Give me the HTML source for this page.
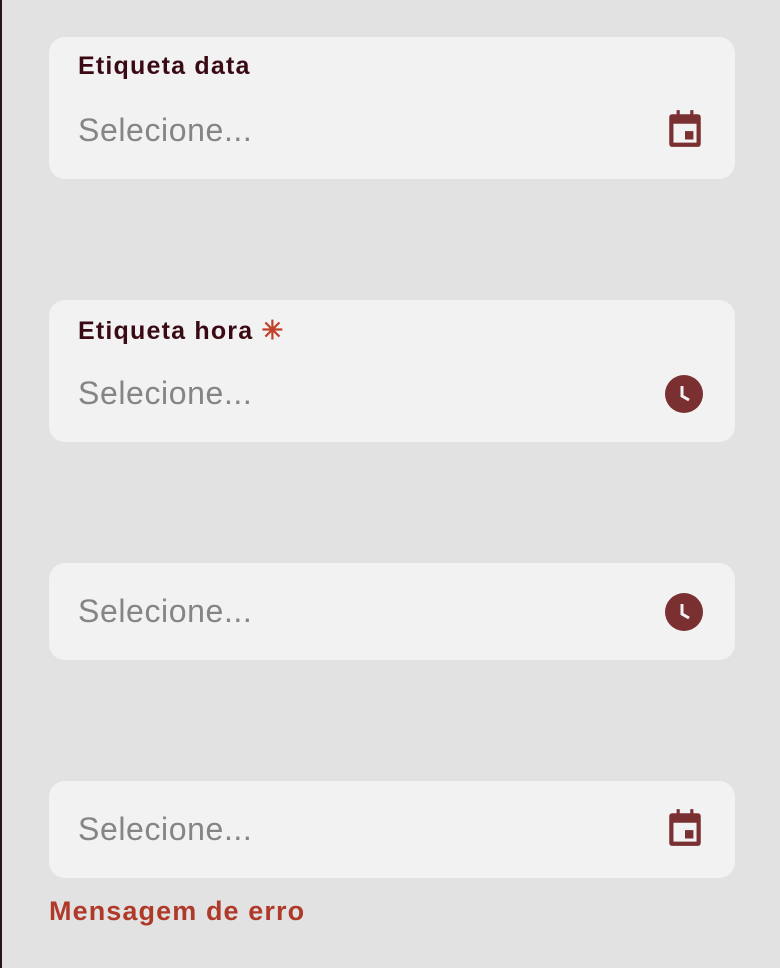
<!DOCTYPE html><html><head><style>
body{margin:0;width:780px;height:968px;background:#e2e2e2;font-family:"Liberation Sans",sans-serif;position:relative;overflow:hidden}
.edge{position:absolute;left:0;top:0;width:2px;height:968px;background:#2a1420}
.b{position:absolute;left:49px;width:686px;background:#f2f2f2;border-radius:16px}
.l{position:absolute;left:29px;font-weight:bold;font-size:25px;letter-spacing:1.2px;color:#3a0a14}
.p{position:absolute;left:29px;font-size:32px;letter-spacing:0.6px;color:#858585}
.i{position:absolute;left:615px}
.e{position:absolute;left:49px;top:896px;font-weight:bold;font-size:27px;letter-spacing:1.1px;color:#b03a2a}
</style></head><body>
<div class="edge"></div>
<div class="b" style="top:37px;height:142px">
<div class="l" style="top:15px">Etiqueta data</div>
<div class="p" style="top:75px">Selecione...</div>
<svg class="i" style="top:71px" width="42" height="42" viewBox="0 0 40 40"><path d="M8 6h4V2h3v4h10V2h3v4h4q3 0 3 3v25q0 3-3 3H8q-3 0-3-3V9q0-3 3-3zM9 15v18h22V15z" fill="#7a2f31"/><rect x="20" y="22" width="8" height="8" fill="#7a2f31"/></svg>
</div>
<div class="b" style="top:300px;height:142px">
<div class="l" style="top:15px">Etiqueta hora <span style="color:#c0402a;font-size:26px">✳</span></div>
<div class="p" style="top:75px">Selecione...</div>
<svg class="i" style="top:74px" width="40" height="40" viewBox="0 0 40 40"><circle cx="20" cy="20" r="19" fill="#7a2f31"/><path d="M18 12v10l7 4" stroke="#f2f2f2" stroke-width="3" fill="none"/></svg>
</div>
<div class="b" style="top:563px;height:97px">
<div class="p" style="top:30px">Selecione...</div>
<svg class="i" style="top:29px" width="40" height="40" viewBox="0 0 40 40"><circle cx="20" cy="20" r="19" fill="#7a2f31"/><path d="M18 12v10l7 4" stroke="#f2f2f2" stroke-width="3" fill="none"/></svg>
</div>
<div class="b" style="top:781px;height:97px">
<div class="p" style="top:30px">Selecione...</div>
<svg class="i" style="top:26px" width="42" height="42" viewBox="0 0 40 40"><path d="M8 6h4V2h3v4h10V2h3v4h4q3 0 3 3v25q0 3-3 3H8q-3 0-3-3V9q0-3 3-3zM9 15v18h22V15z" fill="#7a2f31"/><rect x="20" y="22" width="8" height="8" fill="#7a2f31"/></svg>
</div>
<div class="e">Mensagem de erro</div>
</body></html>
